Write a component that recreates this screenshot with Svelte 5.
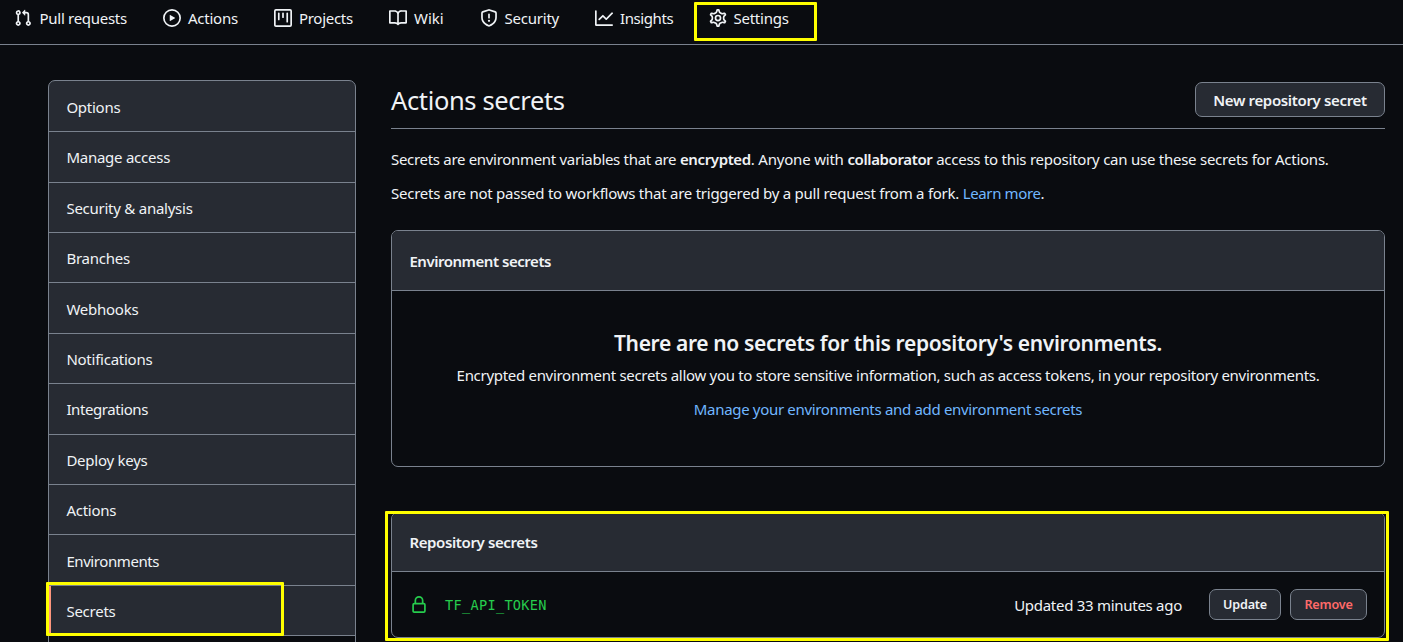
<script>
  const tabs = [
    { label: 'Pull requests', icon: 'pull', cls: 'w-pull' },
    { label: 'Actions', icon: 'play', cls: 'w-actions' },
    { label: 'Projects', icon: 'project', cls: 'w-projects' },
    { label: 'Wiki', icon: 'book', cls: 'w-wiki' },
    { label: 'Security', icon: 'shield', cls: 'w-security' },
    { label: 'Insights', icon: 'graph', cls: 'w-insights' },
    { label: 'Settings', icon: 'gear', cls: 'w-settings' }
  ];

  const paths = {
    pull: 'M7.177 3.073L9.573.677A.25.25 0 0110 .854v4.792a.25.25 0 01-.427.177L7.177 3.427a.25.25 0 010-.354zM3.75 2.5a.75.75 0 100 1.5.75.75 0 000-1.5zm-2.25.75a2.25 2.25 0 113 2.122v5.256a2.251 2.251 0 11-1.5 0V5.372A2.25 2.25 0 011.5 3.25zM11 2.5h-1V4h1a1 1 0 011 1v5.628a2.251 2.251 0 101.5 0V5A2.5 2.5 0 0011 2.5zm1 10.25a.75.75 0 111.5 0 .75.75 0 01-1.5 0zM3.75 12a.75.75 0 100 1.5.75.75 0 000-1.5z',
    play: 'M1.5 8a6.5 6.5 0 1113 0 6.5 6.5 0 01-13 0zM8 0a8 8 0 100 16A8 8 0 008 0zM6.379 5.227A.25.25 0 006 5.442v5.117a.25.25 0 00.379.214l4.264-2.559a.25.25 0 000-.428L6.379 5.227z',
    project: 'M1.75 0A1.75 1.75 0 000 1.75v12.5C0 15.216.784 16 1.75 16h12.5A1.75 1.75 0 0016 14.25V1.75A1.75 1.75 0 0014.25 0H1.75zM1.5 1.75a.25.25 0 01.25-.25h12.5a.25.25 0 01.25.25v12.5a.25.25 0 01-.25.25H1.75a.25.25 0 01-.25-.25V1.75zM11.75 3a.75.75 0 00-.75.75v7.5a.75.75 0 001.5 0v-7.5a.75.75 0 00-.75-.75zm-8.25.75a.75.75 0 011.5 0v5.5a.75.75 0 01-1.5 0v-5.5zM8 3a.75.75 0 00-.75.75v3.5a.75.75 0 001.5 0v-3.5A.75.75 0 008 3z',
    book: 'M0 1.75A.75.75 0 01.75 1h4.253c1.227 0 2.317.59 3 1.501A3.744 3.744 0 0111.006 1h4.245a.75.75 0 01.75.75v10.5a.75.75 0 01-.75.75h-4.507a2.25 2.25 0 00-1.591.659l-.622.621a.75.75 0 01-1.06 0l-.622-.621A2.25 2.25 0 005.258 13H.75a.75.75 0 01-.75-.75V1.75zm8.755 3a2.25 2.25 0 012.25-2.25H14.5v9h-3.757c-.71 0-1.4.201-1.992.572l.004-7.322zm-1.504 7.324l.004-5.073-.002-2.253A2.25 2.25 0 005.003 2.5H1.5v9h3.757a3.75 3.75 0 011.994.574z',
    shield: 'M7.467.133a1.75 1.75 0 011.066 0l5.25 1.68A1.75 1.75 0 0115 3.48V7c0 1.566-.32 3.182-1.303 4.682-.983 1.498-2.585 2.813-5.032 3.855a1.7 1.7 0 01-1.33 0c-2.447-1.042-4.049-2.357-5.032-3.855C1.32 10.182 1 8.566 1 7V3.48a1.75 1.75 0 011.217-1.667l5.25-1.68zm.61 1.429a.25.25 0 00-.153 0l-5.25 1.68a.25.25 0 00-.174.238V7c0 1.358.275 2.666 1.057 3.86.784 1.194 2.121 2.34 4.366 3.297a.2.2 0 00.154 0c2.245-.956 3.582-2.104 4.366-3.298C13.225 9.666 13.5 8.36 13.5 7V3.48a.25.25 0 00-.174-.237l-5.25-1.68zM9 10.5a1 1 0 11-2 0 1 1 0 012 0zm-.25-5.75a.75.75 0 10-1.5 0v3a.75.75 0 001.5 0v-3z',
    graph: 'M1.5 1.75a.75.75 0 00-1.5 0v12.5c0 .414.336.75.75.75h14.5a.75.75 0 000-1.5H1.5V1.75zm14.28 2.53a.75.75 0 00-1.06-1.06L10 7.94 7.53 5.47a.75.75 0 00-1.06 0L3.22 8.72a.75.75 0 001.06 1.06L7 7.06l2.47 2.47a.75.75 0 001.06 0l5.25-5.25z'
  };

  const gear =
    'M7.429 1.525a6.593 6.593 0 011.142 0c.036.003.108.036.137.146l.289 1.105c.147.56.55.967.997 1.189.174.086.341.183.501.29.417.278.97.423 1.53.27l1.102-.303c.11-.03.175.016.195.046.219.31.41.641.573.989.014.031.022.11-.059.19l-.815.806c-.411.406-.562.957-.53 1.456a4.588 4.588 0 010 .582c-.032.499.119 1.05.53 1.456l.815.806c.08.08.073.159.059.19a6.494 6.494 0 01-.573.99c-.02.029-.086.074-.195.045l-1.103-.303c-.559-.153-1.112-.008-1.529.27-.16.107-.327.204-.5.29-.449.222-.851.628-.998 1.189l-.289 1.105c-.029.11-.101.143-.137.146a6.613 6.613 0 01-1.142 0c-.036-.003-.108-.037-.137-.146l-.289-1.105c-.147-.56-.55-.967-.997-1.189a4.502 4.502 0 01-.501-.29c-.417-.278-.97-.423-1.53-.27l-1.102.303c-.11.03-.175-.016-.195-.046a6.492 6.492 0 01-.573-.989c-.014-.031-.022-.11.059-.19l.815-.806c.411-.406.562-.957.53-1.456a4.587 4.587 0 010-.582c.032-.499-.119-1.05-.53-1.456l-.815-.806c-.08-.08-.073-.159-.059-.19a6.44 6.44 0 01.573-.99c.02-.029.086-.075.195-.045l1.103.303c.559.153 1.112.008 1.529-.27.16-.107.327-.204.5-.29.449-.222.851-.628.998-1.189l.289-1.105c.029-.11.101-.143.137-.146z';

  const menu = [
    'Options', 'Manage access', 'Security & analysis', 'Branches', 'Webhooks', 'Notifications',
    'Integrations', 'Deploy keys', 'Actions', 'Environments', 'Secrets'
  ];
</script>

<div class="page">
  <nav>
    {#each tabs as tab}
      <div class="tab {tab.cls}">
        <svg width="18" height="18" viewBox="0 0 16 16">
          {#if tab.icon === 'gear'}
            <g fill="none" stroke="currentColor">
              <path d={gear} transform="translate(8 8) scale(1.115) translate(-8 -8)" stroke-width="1.345" />
              <circle cx="8" cy="8" r="2.25" stroke-width="1.5" />
            </g>
          {:else}
            <path d={paths[tab.icon]} fill="currentColor" fill-rule="evenodd" />
          {/if}
        </svg>
        <span>{tab.label}</span>
        {#if tab.icon === 'gear'}<i class="mark mark-settings"></i>{/if}
      </div>
    {/each}
  </nav>

  <div class="body">
    <aside>
      {#each menu as item}
        <div class="item" class:current={item === 'Secrets'} class:tight={item === 'Integrations' || item === 'Environments'}>
          <span>{item}</span>
          {#if item === 'Secrets'}<i class="mark mark-secrets"></i>{/if}
        </div>
      {/each}
      <div class="item next"></div>
    </aside>

    <main>
      <header>
        <h2>Actions secrets</h2>
        <button class="new">New repository secret</button>
      </header>
      <p class="intro first"><span class="a">Secrets are environment variables that are{' '}</span><b>encrypted</b><span class="b">. Anyone with{' '}</span><b>collaborator</b> access to this repository can use these secrets for Actions.</p>
      <p class="intro">Secrets are not passed to workflows that are triggered by a pull request from a fork. <a href="#learn">Learn more</a>.</p>

      <section class="box env">
        <div class="box-head"><h3 class="env-title">Environment secrets</h3></div>
        <div class="blank">
          <h4>There are no secrets for this repository's environments.</h4>
          <p>Encrypted environment secrets allow you to store sensitive information, such as access tokens, in your repository environments.</p>
          <a href="#manage">Manage your environments and add environment secrets</a>
        </div>
      </section>

      <section class="box repo">
        <div class="box-head"><h3>Repository secrets</h3></div>
        <div class="row">
          <svg width="18" height="18" viewBox="0 0 16 16"><path fill="currentColor" fill-rule="evenodd" d="M4 4v2h-.25A1.75 1.75 0 002 7.75v5.5c0 .966.784 1.75 1.75 1.75h8.5A1.75 1.75 0 0014 13.25v-5.5A1.75 1.75 0 0012.25 6H12V4a4 4 0 10-8 0zm6.5 2V4a2.5 2.5 0 10-5 0v2h5zM12 7.5h.25a.25.25 0 01.25.25v5.5a.25.25 0 01-.25.25h-8.5a.25.25 0 01-.25-.25v-5.5a.25.25 0 01.25-.25H12z" /></svg>
          <code>TF_API_TOKEN</code>
          <span class="updated">Updated 33 minutes ago</span>
          <button class="small update">Update</button>
          <button class="small remove">Remove</button>
        </div>
        <i class="mark mark-repo"></i>
      </section>
    </main>
  </div>
</div>

<style>
  :global(body) { margin: 0; background: #0a0c10; overflow: hidden; }
  .page {
    width: 1403px; height: 642px; overflow: hidden; background: #0a0c10; color: #f0f3f6;
    font: 15px/24px "Noto Sans", "Open Sans", sans-serif; letter-spacing: -0.25px;
    box-sizing: border-box;
  }
  nav { display: flex; height: 44px; padding-left: 14px; border-bottom: 1px solid #7a828e; }
  .tab { display: flex; align-items: flex-start; gap: 7px; padding-top: 6px; position: relative; white-space: nowrap; box-sizing: border-box; height: 44px; }
  .tab svg { margin-top: 3px; flex: none; }
  .w-pull { width: 149px; gap: 7.6px; letter-spacing: -0.3px; }
  .w-actions { width: 111px; }
  .w-projects { width: 115px; letter-spacing: -0.3px; }
  .w-wiki { width: 91px; letter-spacing: 0; }
  .w-security { width: 115px; gap: 6.5px; letter-spacing: -0.22px; }
  .w-insights { width: 114px; letter-spacing: -0.42px; }
  .w-settings { width: 100px; gap: 6.5px; letter-spacing: -0.25px; }

  .mark { position: absolute; border: 3px solid #ffff00; border-radius: 1px; box-sizing: border-box; pointer-events: none; }
  .mark-settings { left: -15px; top: 2px; width: 123px; height: 39px; }
  .mark-secrets { left: -3px; top: -4px; width: 238px; height: 54px; }
  .mark-repo { left: -7px; top: -2px; width: 1004px; height: 130px; }

  .body { display: flex; gap: 35px; padding: 35px 18px 0 48px; }
  aside { width: 308px; flex: none; box-sizing: border-box; border: 1px solid #7a828e; border-radius: 7px 7px 0 0; background: #272b33; }
  .item { box-sizing: border-box; height: 50.42px; padding: 13.2px 17.4px 0; border-bottom: 1px solid #7a828e; position: relative; }
  .item:first-child { height: 51.1px; padding-top: 14px; }
  .item.tight { letter-spacing: -0.42px; }
  .item.current { box-shadow: inset 2px 0 #ff967d; }
  .item.next { background: #0a0c10; }

  main { width: 994px; }
  header { display: flex; justify-content: space-between; height: 48px; border-bottom: 1px solid #7a828e; }
  h2 { margin: 2px 0 0; font-size: 25.5px; line-height: 36px; font-weight: 400; letter-spacing: -0.36px; }
  button { font-family: inherit; font-weight: 600; color: #f0f3f6; background: #272b33; border: 1px solid #7a828e; border-radius: 7px; box-sizing: border-box; padding: 0; }
  .new { width: 190px; height: 35px; margin-top: 2px; font-size: 15px; letter-spacing: -0.34px; }
  p { margin: 0; white-space: nowrap; }
  .intro { margin-top: 10px; }
  .intro.first { margin-top: 18px; }
  .intro .a { letter-spacing: -0.31px; }
  .intro .b { letter-spacing: -0.2px; }
  b { font-weight: 600; letter-spacing: -0.37px; }
  a { color: #71b7ff; text-decoration: none; }
  .intro a { letter-spacing: -0.38px; }

  .box { box-sizing: border-box; border: 1px solid #7a828e; border-radius: 7px; position: relative; }
  .box-head { background: #272b33; border-bottom: 1px solid #7a828e; border-radius: 6px 6px 0 0; height: 59px; padding: 17px 17.4px 0; box-sizing: border-box; }
  h3 { margin: 0; font-size: 15px; line-height: 24px; font-weight: 600; letter-spacing: -0.38px; }
  .env-title { letter-spacing: -0.46px; }
  .env { height: 237px; margin-top: 25px; }
  .env .box-head { height: 60px; padding-top: 18px; }
  .blank { text-align: center; padding-top: 35px; letter-spacing: -0.3px; }
  h4 { margin: 0; font-size: 21px; line-height: 34px; font-weight: 600; letter-spacing: -0.35px; }
  .blank p { margin: 3px 0 10px; }
  .blank a { display: block; letter-spacing: -0.32px; }
  .repo { height: 126px; margin-top: 45px; }
  .row { display: flex; align-items: center; height: 65px; padding: 0 17px 0 17.5px; }
  .row svg { color: #26cd4d; flex: none; }
  code { font: 13.6px/20px "DejaVu Sans Mono", monospace; letter-spacing: 0.3px; color: #26cd4d; margin-left: 17.5px; }
  .updated { margin-left: auto; margin-right: 27px; letter-spacing: -0.28px; }
  .small { height: 31px; font-size: 12.6px; letter-spacing: -0.2px; }
  .update { width: 72px; margin-right: 9px; }
  .remove { width: 77px; color: #ff6a69; }
</style>
